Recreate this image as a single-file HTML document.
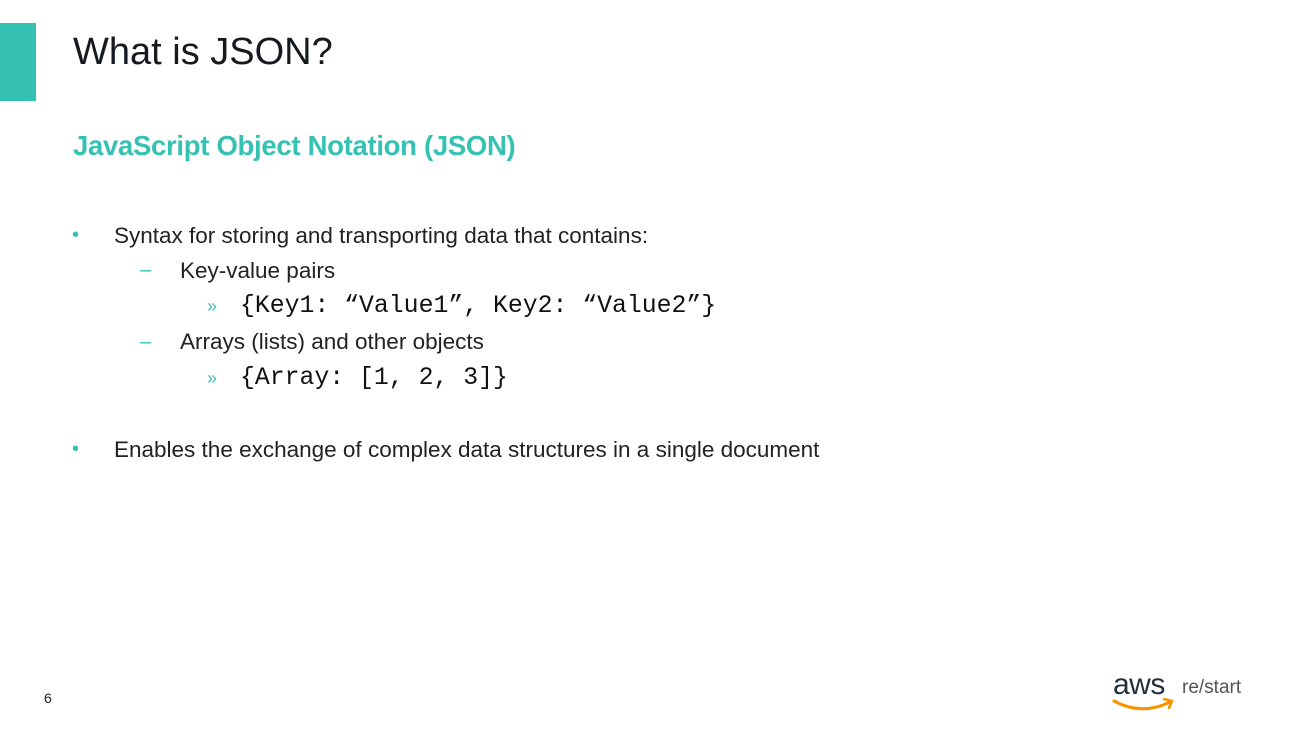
<!DOCTYPE html>
<html><head><style>
body{margin:0;width:1312px;height:736px;background:#fff;position:relative;overflow:hidden;font-family:"Liberation Sans",sans-serif;color:#222}
.a{position:absolute;white-space:nowrap}
.bar{position:absolute;left:0;top:23px;width:36px;height:78px;background:#35c2b2}
.t{left:73px;top:31px;font-size:38px;color:#16191f}
.s{left:73px;top:130px;font-size:27.5px;font-weight:bold;color:#35c2b2;letter-spacing:-0.3px}
.b{font-size:22.5px;color:#222}
.dot{color:#35c2b2;font-size:20px}
.m{font-family:"Liberation Mono",monospace;font-size:24.8px;color:#111}
.r{color:#35c2b2;font-size:18px}
</style></head><body>
<div class="bar"></div>
<div class="a t">What is JSON?</div>
<div class="a s">JavaScript Object Notation (JSON)</div>
<div class="a dot" style="left:72px;top:224px">•</div>
<div class="a b" style="left:114px;top:223px">Syntax for storing and transporting data that contains:</div>
<div class="a dot" style="left:140px;top:259px">–</div>
<div class="a b" style="left:180px;top:258px">Key-value pairs</div>
<div class="a r" style="left:207px;top:296px">»</div>
<div class="a m" style="left:240px;top:292px">{Key1: “Value1”, Key2: “Value2”}</div>
<div class="a dot" style="left:140px;top:331px">–</div>
<div class="a b" style="left:180px;top:329px">Arrays (lists) and other objects</div>
<div class="a r" style="left:207px;top:368px">»</div>
<div class="a m" style="left:240px;top:364px">{Array: [1, 2, 3]}</div>
<div class="a dot" style="left:72px;top:438px">•</div>
<div class="a b" style="left:114px;top:437px">Enables the exchange of complex data structures in a single document</div>
<div class="a" style="left:44px;top:690px;font-size:14px;color:#222">6</div>
<div class="a" style="left:1113px;top:668px;font-size:30px;color:#232f3e;letter-spacing:-0.5px">aws</div>
<svg class="a" style="left:1112px;top:696px" width="66" height="18" viewBox="0 0 66 18"><path d="M2 5 Q30 20 58 6" stroke="#f79400" stroke-width="3" fill="none" stroke-linecap="round"/><path d="M52 3 L60 5 L57 12" stroke="#f79400" stroke-width="2.5" fill="none" stroke-linecap="round"/></svg>
<div class="a" style="left:1182px;top:677px;font-size:19px;color:#555">re/start</div>
</body></html>
